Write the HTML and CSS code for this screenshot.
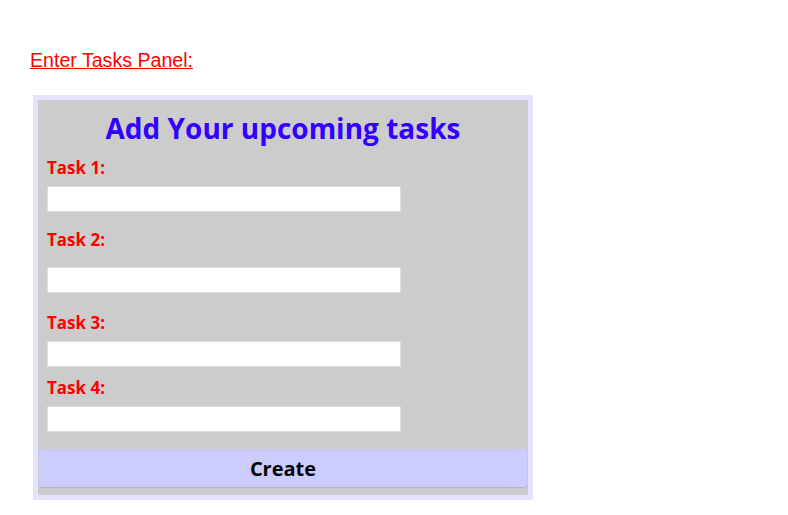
FILE: index.html
```html
<!DOCTYPE html>
<html>
<head>
<meta charset="utf-8">
<link rel="stylesheet" href="styles.css">
</head>
<body>
<div class="page">
  <a class="caption" href="#">Enter Tasks Panel:</a>
  <form class="panel">
    <h1 class="title">Add Your upcoming tasks</h1>
    <label class="label l1">Task 1:</label>
    <input class="field" type="text">
    <label class="label l2">Task 2:</label>
    <input class="field f2" type="text">
    <label class="label l3">Task 3:</label>
    <input class="field" type="text">
    <label class="label l4">Task 4:</label>
    <input class="field" type="text">
    <button class="create" type="button">Create</button>
  </form>
</div>
</body>
</html>
```
FILE: styles.css
```css
html, body {
  margin: 0;
  padding: 0;
  background: #ffffff;
}
.page {
  display: flex;
  flex-direction: column;
  align-items: flex-start;
  padding: 48px 0 0 30px;
}
.caption {
  font-family: "Liberation Sans", Arial, sans-serif;
  font-size: 19.6px;
  line-height: 24px;
  color: #ff0000;
  text-decoration: underline;
}
.panel {
  margin: 23px 0 0 3px;
  width: 490px;
  border: 5px solid #e3e3ff;
  background: #cccccc;
  display: flex;
  flex-direction: column;
  align-items: flex-start;
  padding: 0 0 8px 0;
  font-family: "Open Sans", "Noto Sans", sans-serif;
}
.title {
  align-self: stretch;
  text-align: center;
  margin: 9px 0 0 0;
  font-size: 28px;
  line-height: 38px;
  font-weight: 700;
  color: #3300ff;
}
.label {
  margin-left: 9px;
  font-size: 17px;
  line-height: 22px;
  font-weight: 700;
  color: #ff0000;
}
.l1 { margin-top: 10px; }
.l2 { margin-top: 17px; }
.l3 { margin-top: 19px; }
.l4 { margin-top: 10px; }
.field {
  box-sizing: border-box;
  margin: 7px 0 0 9px;
  width: 354px;
  height: 26px;
  border: 1px solid #dddddd;
  background: #ffffff;
  padding: 0;
}
.f2 { margin-top: 16px; }
.create {
  margin: 17px 1px 0 1px;
  align-self: stretch;
  height: 38px;
  background: #ccccff;
  border: none;
  border-radius: 3px;
  box-shadow: 0 1px 1px rgba(0, 0, 0, 0.12);
  font-family: "Open Sans", "Noto Sans", sans-serif;
  font-size: 20px;
  font-weight: 700;
  color: #000000;
}
```
